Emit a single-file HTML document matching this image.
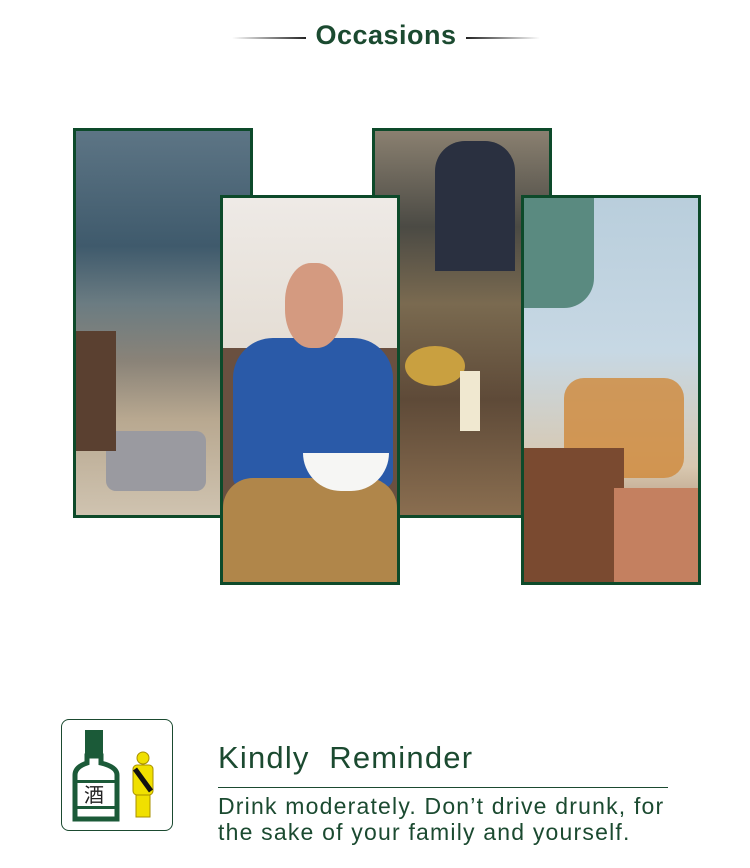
<!DOCTYPE html>
<html><head><style>
body{margin:0;width:750px;height:868px;background:#fff;position:relative;overflow:hidden;font-family:"Liberation Sans",Arial,sans-serif}
.t{position:absolute;top:20px;left:11px;width:750px;text-align:center;font-weight:bold;font-size:27px;color:#1b4a30;letter-spacing:0.5px}
.ln{position:absolute;top:37px;height:2px}
.p{position:absolute;width:174px;height:384px;border:3px solid #0d4a2a;overflow:hidden}
.p div{position:absolute}
</style></head><body>
<div class="ln" style="left:232px;width:74px;background:linear-gradient(90deg,#fff,#222)"></div>
<div class="ln" style="left:466px;width:74px;background:linear-gradient(90deg,#222,#fff)"></div>
<div class="t">Occasions</div>

<div class="p" style="left:73px;top:128px;background:linear-gradient(180deg,#5d7585 0%,#3f5a6c 30%,#6b7c82 45%,#8a8378 60%,#b8a890 75%,#cfc3b0 100%)">
 <div style="left:30px;top:300px;width:100px;height:60px;background:#9a9aa0;border-radius:10px"></div>
 <div style="left:0;top:200px;width:40px;height:120px;background:#5a4030"></div>
</div>
<div class="p" style="left:372px;top:128px;background:linear-gradient(180deg,#8a8070 0%,#4b4a44 25%,#7a6a50 45%,#5e4a38 70%,#8a6e50 100%)">
 <div style="left:60px;top:10px;width:80px;height:130px;background:#2a3040;border-radius:30px 30px 0 0"></div>
 <div style="left:30px;top:215px;width:60px;height:40px;background:#c9a040;border-radius:50%"></div>
 <div style="left:85px;top:240px;width:20px;height:60px;background:#f0e8d0"></div>
</div>
<div class="p" style="left:220px;top:195px;background:linear-gradient(180deg,#eeeae6 0%,#e4ddd4 40%,#b0a090 100%)">
 <div style="left:0;top:150px;width:174px;height:240px;background:#6a5040"></div>
 <div style="left:10px;top:140px;width:160px;height:150px;background:#2a5aa8;border-radius:40px 40px 10px 10px"></div>
 <div style="left:62px;top:65px;width:58px;height:85px;background:#d49a80;border-radius:45%"></div>
 <div style="left:0;top:280px;width:174px;height:110px;background:#b0864a;border-radius:30px 30px 0 0"></div>
 <div style="left:80px;top:255px;width:86px;height:38px;background:#f6f6f4;border-radius:0 0 45px 45px"></div>
</div>
<div class="p" style="left:521px;top:195px;background:linear-gradient(180deg,#b9cedc 0%,#c7d8e4 40%,#d8c8b0 70%,#8a5a40 100%)">
 <div style="left:0;top:0;width:70px;height:110px;background:#5a8a80;border-radius:0 0 30px 0"></div>
 <div style="left:40px;top:180px;width:120px;height:100px;background:#d0883a;border-radius:20px;opacity:.8"></div>
 <div style="left:0;top:250px;width:100px;height:140px;background:#7a4a30"></div>
 <div style="left:90px;top:290px;width:84px;height:100px;background:#c48060"></div>
</div>

<div style="position:absolute;left:61px;top:719px;width:112px;height:112px;border:1px solid #1b4a30;border-radius:8px;box-sizing:border-box"></div>
<svg style="position:absolute;left:61px;top:719px" width="112" height="112">
 <rect x="24" y="11" width="18" height="26" fill="#1b5a38"/>
 <path d="M26 37 H40 V44 Q56 48 56 56 V100 H14 V56 Q14 48 26 44 Z" fill="#fff" stroke="#1b5a38" stroke-width="5"/>
 <rect x="16" y="61" width="38" height="3" fill="#1b5a38"/>
 <rect x="16" y="87" width="38" height="3" fill="#1b5a38"/>
 <text x="23" y="83" font-size="20" font-family="Noto Sans CJK SC,sans-serif" fill="#222">酒</text>
 <circle cx="82" cy="39" r="6" fill="#f0e000" stroke="#a89000"/>
 <rect x="72" y="46" width="20" height="30" rx="4" fill="#f0e000" stroke="#a89000"/>
 <rect x="75" y="76" width="14" height="22" fill="#f0e000" stroke="#a89000"/>
 <path d="M74 50 L90 72" stroke="#111" stroke-width="5"/>
</svg>
<div style="position:absolute;left:218px;top:740px;font-size:31px;color:#1b4a30;white-space:pre;letter-spacing:1.2px">Kindly  Reminder</div>
<div style="position:absolute;left:218px;top:787px;width:450px;height:1px;background:#1b4a30"></div>
<div style="position:absolute;left:218px;top:793px;font-size:23px;line-height:26px;color:#1b4a30;letter-spacing:1.2px;white-space:nowrap">Drink moderately. Don’t drive drunk, for<br>the sake of your family and yourself.</div>
</body></html>
